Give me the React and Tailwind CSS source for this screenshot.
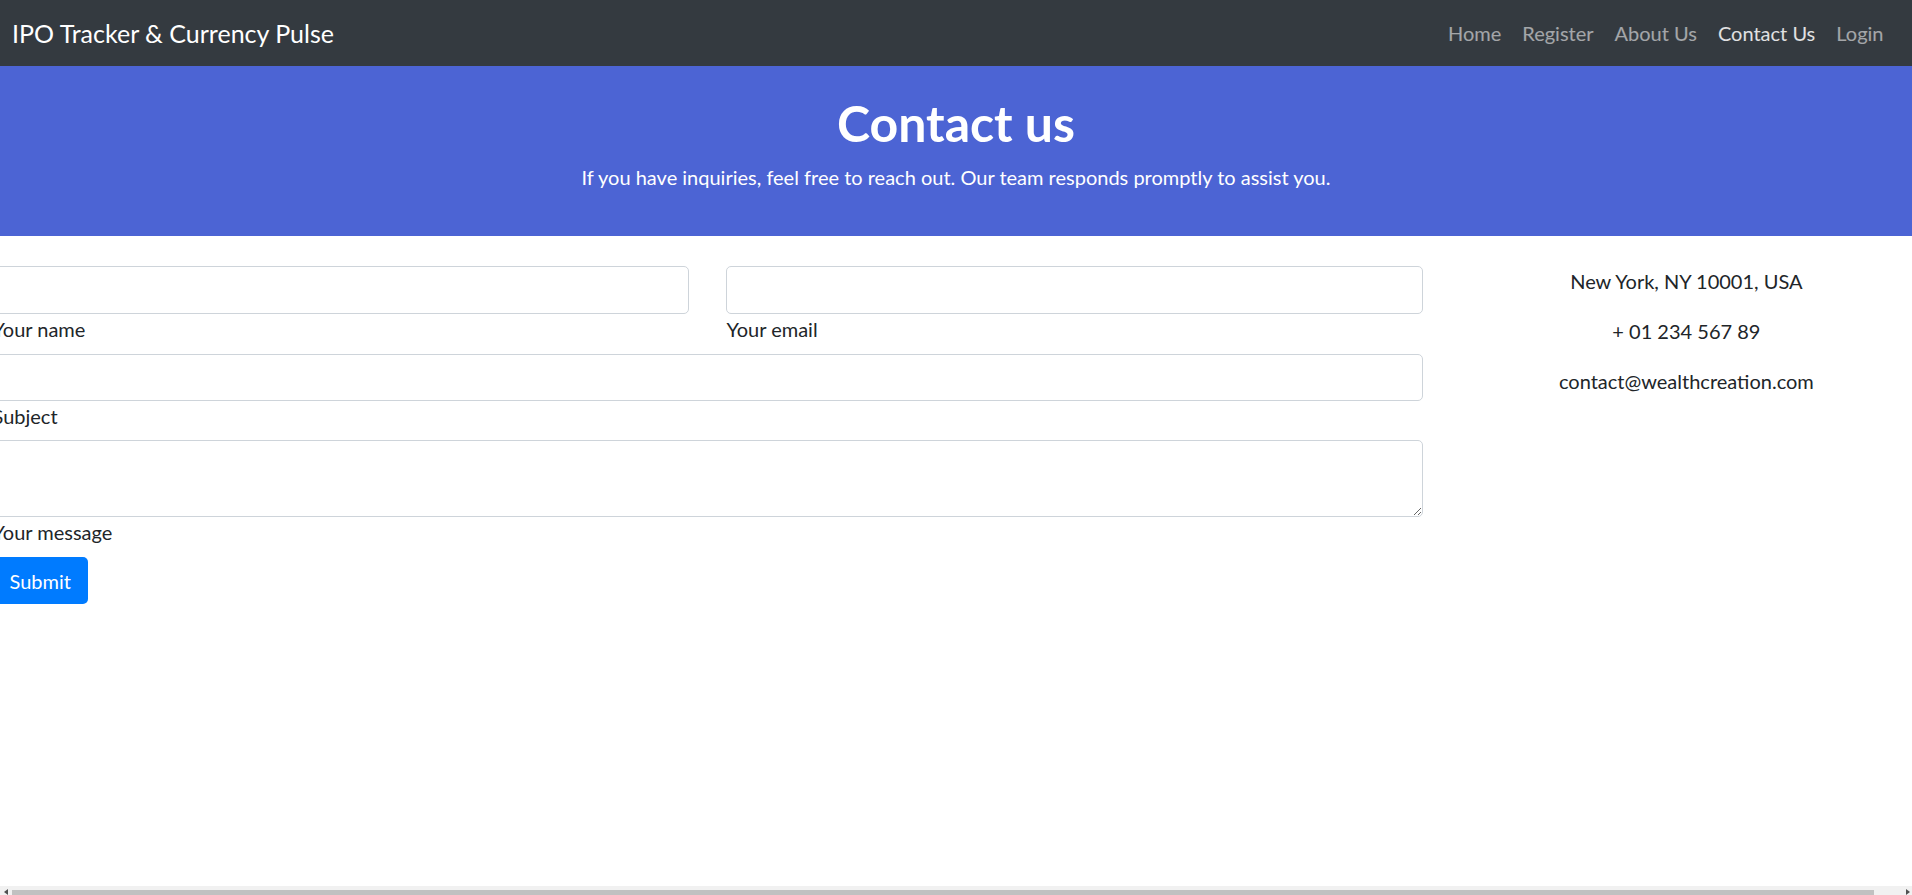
import React from "react";

export default function App() {
  const links = ["Home", "Register", "About Us", "Contact Us", "Login"];
  return (
    <div className="h-[895px] w-[1912px] overflow-hidden flex flex-col bg-white text-[#212529] font-['Lato',sans-serif]">
      <nav className="h-[66px] shrink-0 bg-[#343a40] flex items-center justify-between pl-[12px] pr-[18px]">
        <span className="text-white text-[25px] leading-none">IPO Tracker &amp; Currency Pulse</span>
        <ul className="flex items-center">
          {links.map((l) => (
            <li
              key={l}
              className={
                "px-[10.5px] text-[20px] leading-[30px] " +
                (l === "Contact Us" ? "text-white/85" : "text-white/55")
              }
            >
              {l}
            </li>
          ))}
        </ul>
      </nav>

      <header className="h-[170px] shrink-0 bg-[#4c64d4] text-white text-center pt-[27px]">
        <h1 className="text-[50px] leading-[60px] font-bold mb-[9px]">Contact us</h1>
        <p className="text-[20px] leading-[30px]">
          If you have inquiries, feel free to reach out. Our team responds promptly to assist you.
        </p>
      </header>

      <main className="flex-1 pt-[30px]">
        <div className="flex ml-[-26px] w-[1957px]">
          <form className="w-3/4 px-[18.5px]">
            <div className="grid grid-cols-2 gap-x-[37px]">
              <div>
                <input type="text" className="block w-full h-[48px] border border-[#ced4da] rounded-[5px] bg-white" />
                <label className="block text-[20px] leading-[30px]">Your name</label>
              </div>
              <div>
                <input type="email" className="block w-full h-[48px] border border-[#ced4da] rounded-[5px] bg-white" />
                <label className="block text-[20px] leading-[30px]">Your email</label>
              </div>
            </div>
            <div className="mt-[10px]">
              <input type="text" className="block w-full h-[47px] border border-[#ced4da] rounded-[5px] bg-white" />
              <label className="block text-[20px] leading-[30px]">Subject</label>
            </div>
            <div className="mt-[9px]">
              <textarea rows={2} className="block w-full h-[77px] border border-[#ced4da] rounded-[5px] bg-white" />
              <label className="block text-[20px] leading-[30px]">Your message</label>
            </div>
            <button
              type="button"
              className="mt-[10px] h-[47px] px-[17px] bg-[#007bff] text-white text-[20px] leading-[30px] rounded-[5px]"
            >
              Submit
            </button>
          </form>
          <div className="w-1/4 px-[18.5px] text-center text-[20px] leading-[30px]">
            <p className="mb-[20px]">New York, NY 10001, USA</p>
            <p className="mb-[20px]">+ 01 234 567 89</p>
            <p>contact@wealthcreation.com</p>
          </div>
        </div>
      </main>

      <div className="h-[9px] shrink-0 bg-[#f1f1f1] flex items-end">
        <div className="w-[12px] h-full flex items-end justify-center">
          <div className="w-0 h-0 border-y-[3px] border-y-transparent border-r-[4px] border-r-[#505050]" />
        </div>
        <div className="flex-1 h-[5px] bg-[#c1c1c1]" />
        <div className="w-[38px] h-full flex items-end justify-end pr-[2px]">
          <div className="w-0 h-0 border-y-[3px] border-y-transparent border-l-[4px] border-l-[#505050]" />
        </div>
      </div>
    </div>
  );
}
